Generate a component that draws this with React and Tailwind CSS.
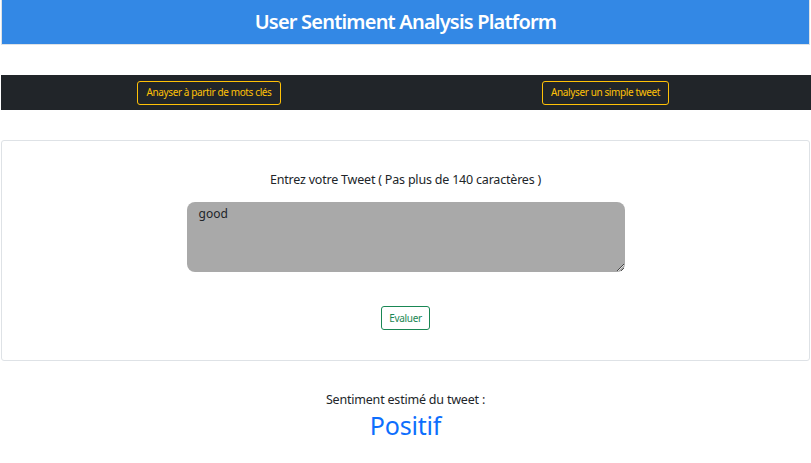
import React from 'react';

const App = () => {
  return (
    <div className="w-[811px] h-[463px] bg-white font-['Segoe_UI','Noto_Sans',sans-serif] text-[#212529] overflow-hidden">
      {/* Header */}
      <div className="mx-[1px] h-[45px] bg-[#3388e5] border border-t-0 border-[#dee2e6] flex items-center justify-center">
        <h1 className="text-white text-[20px] font-semibold tracking-[-0.8px]">User Sentiment Analysis Platform</h1>
      </div>

      {/* Nav */}
      <div className="mt-[30px] ml-[1px] h-[35px] bg-[#212529] grid grid-cols-2 items-center">
        <div className="flex justify-center pl-[11px]">
          <button className="h-[24px] px-[8px] border border-[#ffc107] rounded-[3px] text-[#ffc107] text-[10px] tracking-[-0.38px]">
            Anayser à partir de mots clés
          </button>
        </div>
        <div className="flex justify-center pr-[6px]">
          <button className="h-[24px] px-[8px] border border-[#ffc107] rounded-[3px] text-[#ffc107] text-[10px] tracking-[-0.38px]">
            Analyser un simple tweet
          </button>
        </div>
      </div>

      {/* Tweet card */}
      <div className="mt-[30px] mx-[1px] h-[221px] border border-[#dee2e6] rounded-[3px] flex flex-col items-center">
        <p className="mt-[29px] text-[12.5px] leading-[20px] tracking-[-0.2px]">Entrez votre Tweet ( Pas plus de 140 caractères )</p>
        <textarea
          defaultValue="good"
          className="mt-[12px] w-[438px] h-[70px] bg-[#a9a9a9] rounded-[8px] px-[12px] py-[3px] text-[12px] text-[#212529] outline-none"
        />
        <button className="mt-[34px] h-[24px] px-[7px] border border-[#198754] rounded-[3px] text-[#198754] text-[10px] tracking-[-0.3px]">
          Evaluer
        </button>
      </div>

      {/* Result */}
      <div className="mt-[30px] flex flex-col items-center">
        <p className="text-[12.5px] leading-[18px] tracking-[-0.2px]">Sentiment estimé du tweet :</p>
        <p className="text-[#0d6efd] text-[25px] leading-[32px] tracking-[-0.2px]">Positif</p>
      </div>
    </div>
  );
};

export default App;
